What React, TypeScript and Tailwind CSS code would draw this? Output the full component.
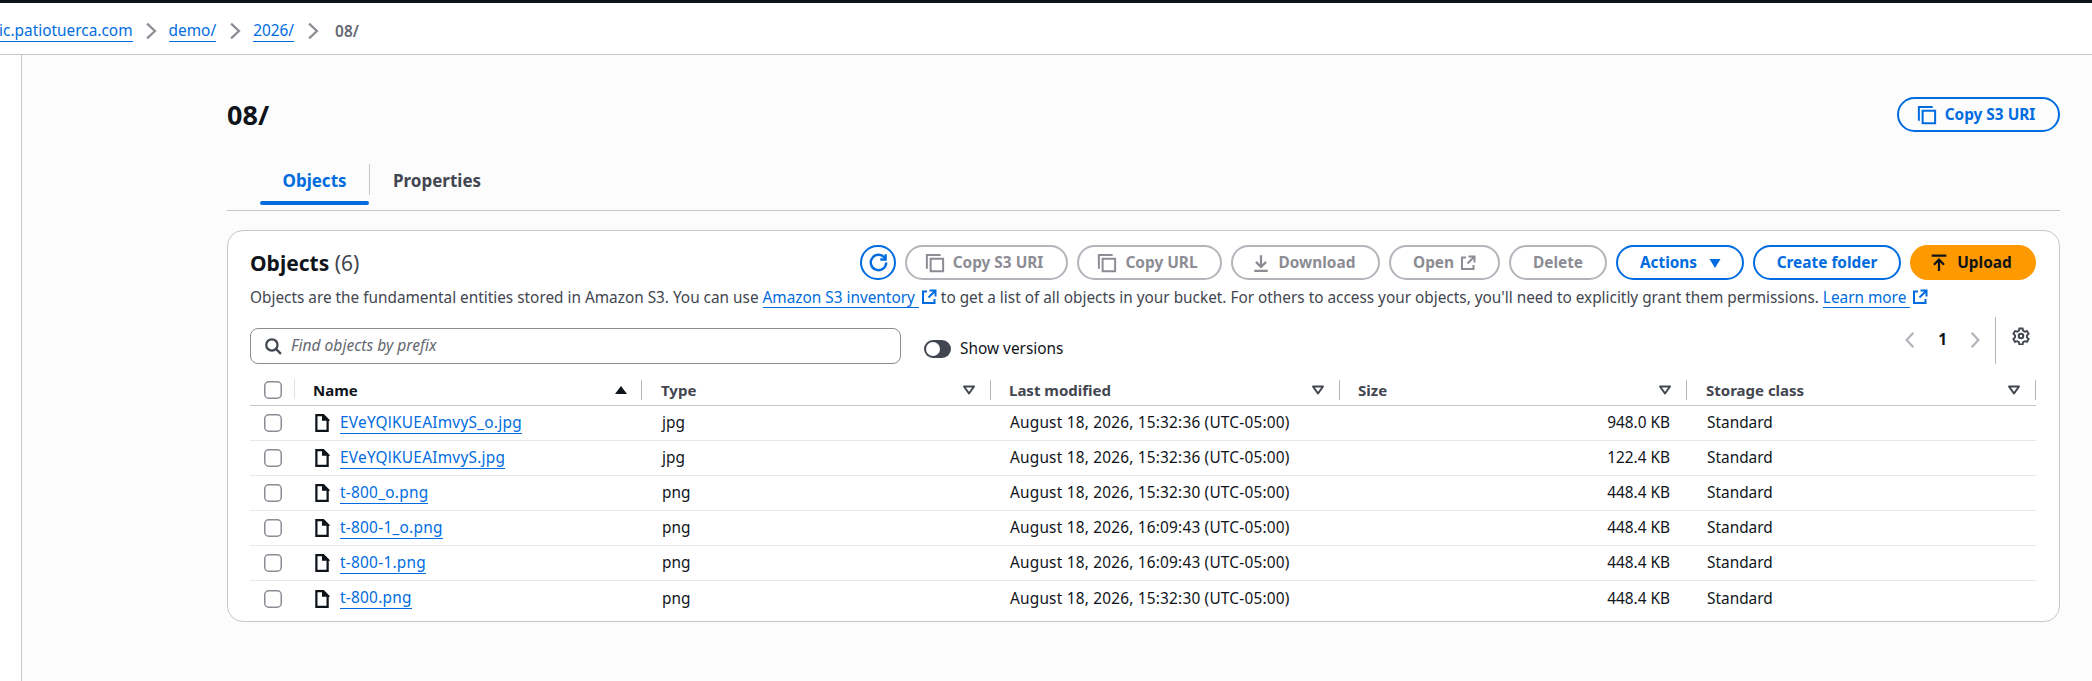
import type { ReactNode } from "react";

const files = [
  { name: "EVeYQlKUEAImvyS_o.jpg", type: "jpg", modified: "August 18, 2026, 15:32:36 (UTC-05:00)", size: "948.0 KB" },
  { name: "EVeYQlKUEAImvyS.jpg", type: "jpg", modified: "August 18, 2026, 15:32:36 (UTC-05:00)", size: "122.4 KB" },
  { name: "t-800_o.png", type: "png", modified: "August 18, 2026, 15:32:30 (UTC-05:00)", size: "448.4 KB" },
  { name: "t-800-1_o.png", type: "png", modified: "August 18, 2026, 16:09:43 (UTC-05:00)", size: "448.4 KB" },
  { name: "t-800-1.png", type: "png", modified: "August 18, 2026, 16:09:43 (UTC-05:00)", size: "448.4 KB" },
  { name: "t-800.png", type: "png", modified: "August 18, 2026, 15:32:30 (UTC-05:00)", size: "448.4 KB" },
];

function Icon({ children, className = "" }: { children: ReactNode; className?: string }) {
  return (
    <svg viewBox="0 0 16 16" fill="none" stroke="currentColor" strokeWidth="2" className={`h-[18px] w-[18px] shrink-0 ${className}`}>
      {children}
    </svg>
  );
}

const CopyIcon = () => (
  <svg viewBox="0 0 16 16" fill="none" stroke="currentColor" strokeWidth="1.6" className="-mx-px h-5 w-5 shrink-0">
    <path d="M1.5 12.5v-11h11" />
    <path d="M4.5 4.5h10v10h-10z" />
  </svg>
);

const ExternalIcon = () => (
  <svg viewBox="0 0 16 16" fill="none" stroke="currentColor" strokeWidth="2" className="inline-block h-4 w-4 shrink-0 align-[-2px]">
    <path d="M6 2.5H2V14h11.5V10" />
    <path d="M8.5 1.5h6v6M14.5 1.5l-7 7" />
  </svg>
);

const Caret = () => (
  <svg viewBox="0 0 18 18" className="h-[18px] w-[18px] shrink-0 text-[#424650]" fill="none" stroke="currentColor" strokeWidth="2">
    <path d="M4 5.5h10l-5 7z" strokeLinejoin="round" />
  </svg>
);

function Chevron({ className = "" }: { className?: string }) {
  return (
    <Icon className={`text-[#8c8c94] ${className}`}>
      <path d="m4.5 1.5 7 6.5-7 6.5" />
    </Icon>
  );
}

function Crumb({ children }: { children: ReactNode }) {
  return <a className="border-b border-[#006ce0] leading-[20px] text-[#006ce0]">{children}</a>;
}

function OutlineButton({ children, className, disabled }: { children: ReactNode; className: string; disabled?: boolean }) {
  return (
    <button
      className={`flex h-[35px] items-center justify-center gap-[9px] rounded-[20px] border-2 font-bold ${
        disabled ? "border-[#b4b4bb] text-[#8c8c94]" : "border-[#006ce0] text-[#006ce0]"
      } ${className}`}
    >
      {children}
    </button>
  );
}

function Checkbox() {
  return (
    <svg viewBox="0 0 18 18" className="block h-[18px] w-[18px]">
      <rect x=".75" y=".75" width="16.5" height="16.5" rx="4" fill="#fff" stroke="#8c8c94" strokeWidth="1.5" />
    </svg>
  );
}

function HeaderCell({ label, sorted, pad = "pl-[18px]" }: { label: string; sorted?: boolean; pad?: string }) {
  return (
    <div className="flex h-[42px] items-end border-b border-[#c6c6cd] pb-[5px]">
      <div className={`flex h-[20px] w-full items-center justify-between border-r border-[#b4b4bb] ${sorted ? "pr-[11px]" : "pr-[12px]"} ${pad}`}>
        <span className={`text-[15px] font-bold ${sorted ? "text-[#0f141a]" : "text-[#424650]"}`}>{label}</span>
        {sorted ? (
          <svg viewBox="0 0 18 18" className="h-[18px] w-[18px] shrink-0 text-[#0f141a]" fill="currentColor">
            <path d="M9 5 15 13H3z" />
          </svg>
        ) : (
          <Caret />
        )}
      </div>
    </div>
  );
}

export default function App() {
  return (
    <div className="flex h-[681px] w-[2092px] flex-col overflow-hidden bg-white font-['Noto_Sans',sans-serif] text-[15.4px] text-[#0f141a]">
      <div className="h-[3px] bg-[#0f141a]" />
      <nav className="flex h-[52px] items-center border-b border-[#c6c6cd] pt-[6px]">
        <div className="-ml-[28px] flex items-center">
          <Crumb>static.patiotuerca.com</Crumb>
          <Chevron className="mx-[9px]" />
          <Crumb>demo/</Crumb>
          <Chevron className="mr-[9px] ml-[10px]" />
          <Crumb>2026/</Crumb>
          <Chevron className="mr-[13px] ml-[10px]" />
          <span className="font-semibold text-[#656871]">08/</span>
        </div>
      </nav>

      <div className="flex min-h-0 flex-1">
        <aside className="w-[22px] shrink-0 border-r border-[#c6c6cd] bg-white" />
        <main className="min-w-0 flex-1 bg-[#fcfcfc] pl-[205px] pr-[32px]">
          <div className="flex items-start justify-between pt-[42px]">
            <h1 className="text-[27px] leading-[36px] font-bold">08/</h1>
            <OutlineButton className="w-[163px] pr-[4px]">
              <CopyIcon />
              Copy S3 URI
            </OutlineButton>
          </div>

          <div className="mt-[31px] flex h-[47px] border-b border-[#c6c6cd] pl-[33px]">
            <div className="relative flex h-[46px] w-[109px] items-center justify-center pb-[12px] text-[17px] font-bold text-[#006ce0]">
              Objects
              <span className="absolute right-0 bottom-[5px] left-0 h-1 rounded-sm bg-[#006ce0]" />
            </div>
            <div className="h-[31px] border-l border-[#c6c6cd]" />
            <div className="flex h-[46px] items-center pb-[12px] pl-[23px] text-[17px] font-bold text-[#424650]">Properties</div>
          </div>

          <section className="mt-[19px] h-[392px] rounded-2xl border border-[#c6c6cd] bg-white pr-[23px] pl-[22px] pt-[14px]">
            <div className="flex h-[35px] items-center justify-between">
              <h2 className="text-[21px] leading-[26px] font-bold">
                Objects <span className="font-normal text-[#424650]">(6)</span>
              </h2>
              <div className="flex items-center gap-[9px]">
                <OutlineButton className="w-[36px]">
                  <svg viewBox="0 0 16 16" fill="none" stroke="currentColor" strokeWidth="2" className="h-[19px] w-[19px] shrink-0">
                    <path d="M13.5 4.5A6.5 6.5 0 1 0 14.5 8" />
                    <path d="M14 1v4.5H9.5" />
                  </svg>
                </OutlineButton>
                <OutlineButton disabled className="w-[163px] pr-[4px]">
                  <CopyIcon />
                  Copy S3 URI
                </OutlineButton>
                <OutlineButton disabled className="w-[145px] pr-[3px]">
                  <CopyIcon />
                  Copy URL
                </OutlineButton>
                <OutlineButton disabled className="w-[149px] pr-[4px]">
                  <Icon>
                    <path d="M8 1v10M3.5 7 8 11.5 12.5 7M2 15h12" />
                  </Icon>
                  Download
                </OutlineButton>
                <OutlineButton disabled className="w-[111px] !gap-[6px]">
                  Open
                  <ExternalIcon />
                </OutlineButton>
                <OutlineButton disabled className="w-[98px]">
                  Delete
                </OutlineButton>
                <OutlineButton className="w-[128px] pl-[4px]">
                  Actions
                  <svg viewBox="0 0 18 18" className="h-[18px] w-[18px] shrink-0" fill="currentColor">
                    <path d="M3.5 5h11L9 14z" />
                  </svg>
                </OutlineButton>
                <OutlineButton className="w-[148px]">Create folder</OutlineButton>
                <button className="flex h-[35px] w-[126px] items-center justify-center gap-[9px] rounded-[20px] bg-[#ff9900] pr-[4px] font-bold text-[#0f141a]">
                  <Icon>
                    <path d="M1.5 1.5h13M8 15V5M3.5 9.5 8 5l4.5 4.5" />
                  </Icon>
                  Upload
                </button>
              </div>
            </div>

            <p className="mt-[6px] leading-[22px] text-[15.35px] text-[#424650]">
              Objects are the fundamental entities stored in Amazon S3. You can use{" "}
              <a className="border-b border-[#006ce0] pr-[4px] text-[#006ce0]">Amazon S3 inventory</a>
              <span className="ml-[2px] text-[#006ce0]">
                <ExternalIcon />
              </span>{" "}
              to get a list of all objects in your bucket. For others to access your objects, you'll need to explicitly grant them
              permissions. <a className="border-b border-[#006ce0] pr-[4px] text-[#006ce0]">Learn more</a>
              <span className="ml-[2px] text-[#006ce0]">
                <ExternalIcon />
              </span>
            </p>

            <div className="mt-[9px] flex h-[47px] items-start">
              <div className="mt-[11px] flex h-[36px] w-[651px] items-center gap-[9px] rounded-lg border border-[#8c8c94] bg-white pl-[13px]">
                <Icon className="text-[#424650]">
                  <circle cx="7" cy="7" r="5" />
                  <path d="m11 11 4 4" />
                </Icon>
                <span className="text-[15.6px] italic text-[#656871]">Find objects by prefix</span>
              </div>
              <div className="mt-[20px] ml-[23px] flex items-center gap-[9px]">
                <span className="flex h-[18px] w-[27px] items-center rounded-full bg-[#424650] pl-[2px]">
                  <span className="h-[14px] w-[14px] rounded-full bg-white" />
                </span>
                <span>Show versions</span>
              </div>
              <div className="ml-auto flex h-[47px] items-start">
                <div className="mt-[12px] flex h-[22px] items-center gap-[19px]">
                  <svg viewBox="0 0 16 16" fill="none" stroke="#b4b4bb" strokeWidth="2" className="h-[18px] w-[18px]">
                    <path d="m11 1.5-6 6.5 6 6.5" />
                  </svg>
                  <span className="font-bold">1</span>
                  <svg viewBox="0 0 16 16" fill="none" stroke="#b4b4bb" strokeWidth="2" className="h-[18px] w-[18px]">
                    <path d="m5 1.5 6 6.5-6 6.5" />
                  </svg>
                </div>
                <div className="ml-[11px] h-[47px] w-[41px] border-l border-[#b4b4bb] pl-[16px] pt-[10px]">
                  <svg viewBox="0 0 24 24" fill="none" stroke="#424650" strokeWidth="2.8" className="h-[18px] w-[18px]">
                    <path d="M9.6 1.5h4.8l.7 3.3 2.6 1.5 3.2-1 2.4 4.2-2.5 2.3v3l2.5 2.3-2.4 4.2-3.2-1-2.6 1.5-.7 3.3H9.6l-.7-3.3-2.6-1.5-3.2 1-2.4-4.2 2.5-2.3v-3L.7 9.5l2.4-4.2 3.2 1 2.6-1.5z" transform="translate(1.2 .6) scale(.9)" />
                    <circle cx="12" cy="12" r="3" />
                  </svg>
                </div>
              </div>
            </div>

            <div className="grid grid-cols-[45px_347px_349px_349px_347px_349px]">
              <div className="flex h-[42px] items-end justify-between border-b border-[#c6c6cd] pb-[6px] pl-[14px]">
                <Checkbox />
                <span className="h-[20px] border-r border-[#e0e0e6]" />
              </div>
              <HeaderCell label="Name" sorted />
              <HeaderCell label="Type" pad="pl-[19px]" />
              <HeaderCell label="Last modified" />
              <HeaderCell label="Size" />
              <HeaderCell label="Storage class" pad="pl-[19px]" />

              {files.map((file, i) => {
                const line = i === files.length - 1 ? "" : "border-b border-[#e6e6eb]";
                const cell = `flex h-[35px] items-center ${line}`;
                return (
                  <div key={file.name} className="contents">
                    <div className={`${cell} pl-[14px]`}><Checkbox /></div>
                    <div className={`${cell} gap-[9px] pl-[18px]`}>
                      <Icon className="text-[#0f141a]">
                        <path d="M3 1h6l4 4v10H3z" />
                        <path d="M9 1v4h4z" fill="currentColor" />
                      </Icon>
                      <a className="border-b border-[#006ce0] leading-[20px] tracking-[0.25px] text-[#006ce0]">{file.name}</a>
                    </div>
                    <div className={`${cell} pl-[20px]`}>{file.type}</div>
                    <div className={`${cell} pl-[19px] tracking-[0.2px]`}>{file.modified}</div>
                    <div className={`${cell} justify-end pr-[17px]`}>{file.size}</div>
                    <div className={`${cell} pl-[20px]`}>Standard</div>
                  </div>
                );
              })}
            </div>
          </section>
        </main>
      </div>
    </div>
  );
}
